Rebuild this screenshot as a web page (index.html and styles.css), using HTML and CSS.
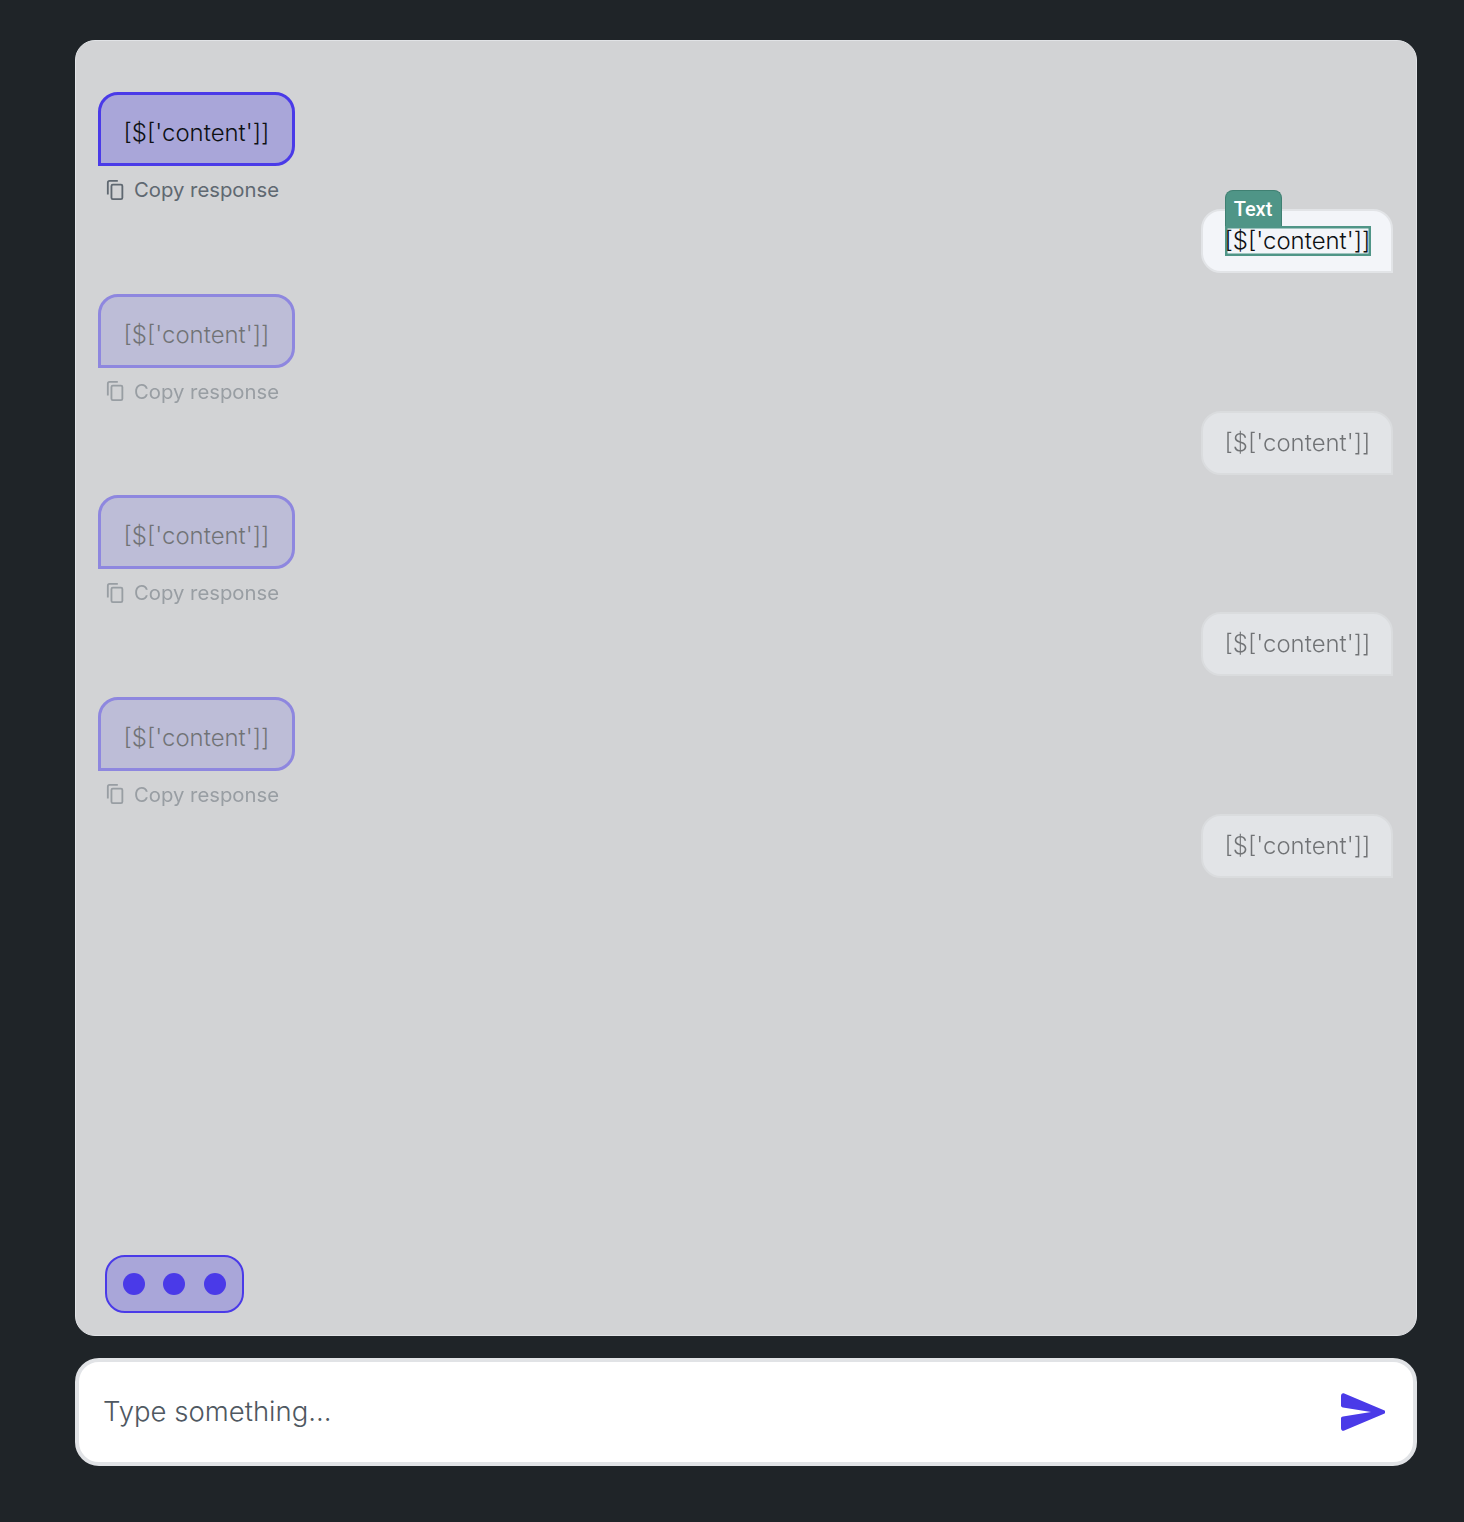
FILE: index.html
```html
<!DOCTYPE html>
<html lang="en">
<head>
    <meta charset="UTF-8">
    <meta name="viewport" content="width=device-width, initial-scale=1.0">
    <title>Chat</title>
    <link rel="stylesheet" href="styles.css">
</head>
<body>
    <div class="chat-wrap">
        <div class="chat-panel">
            <div class="messages">
                <div class="exchange">
                    <div class="agent-msg">
                        <div class="agent-bubble">[$['content']]</div>
                        <div class="copy-row">
                            <svg class="copy-icon" viewBox="0 0 20 22"><path d="M2 16V3a2 2 0 0 1 2-2h9M7.500 5h9a1.500 1.500 0 0 1 1.500 1.500v13a1.500 1.500 0 0 1-1.500 1.500h-9a1.500 1.500 0 0 1-1.500-1.500v-13A1.500 1.500 0 0 1 7.500 5z"/></svg>
                            <span>Copy response</span>
                        </div>
                    </div>
                    <div class="user-msg">
                        <div class="user-bubble">
                            <span class="field-tag">Text</span>
                            <span class="field-text">[$['content']]</span>
                        </div>
                    </div>
                </div>
                <div class="exchange faded">
                    <div class="agent-msg">
                        <div class="agent-bubble">[$['content']]</div>
                        <div class="copy-row">
                            <svg class="copy-icon" viewBox="0 0 20 22"><path d="M2 16V3a2 2 0 0 1 2-2h9M7.500 5h9a1.500 1.500 0 0 1 1.500 1.500v13a1.500 1.500 0 0 1-1.500 1.500h-9a1.500 1.500 0 0 1-1.500-1.500v-13A1.500 1.500 0 0 1 7.500 5z"/></svg>
                            <span>Copy response</span>
                        </div>
                    </div>
                    <div class="user-msg">
                        <div class="user-bubble">[$['content']]</div>
                    </div>
                </div>
                <div class="exchange faded">
                    <div class="agent-msg">
                        <div class="agent-bubble">[$['content']]</div>
                        <div class="copy-row">
                            <svg class="copy-icon" viewBox="0 0 20 22"><path d="M2 16V3a2 2 0 0 1 2-2h9M7.500 5h9a1.500 1.500 0 0 1 1.500 1.500v13a1.500 1.500 0 0 1-1.500 1.500h-9a1.500 1.500 0 0 1-1.500-1.500v-13A1.500 1.500 0 0 1 7.500 5z"/></svg>
                            <span>Copy response</span>
                        </div>
                    </div>
                    <div class="user-msg">
                        <div class="user-bubble">[$['content']]</div>
                    </div>
                </div>
                <div class="exchange faded">
                    <div class="agent-msg">
                        <div class="agent-bubble">[$['content']]</div>
                        <div class="copy-row">
                            <svg class="copy-icon" viewBox="0 0 20 22"><path d="M2 16V3a2 2 0 0 1 2-2h9M7.500 5h9a1.500 1.500 0 0 1 1.500 1.500v13a1.500 1.500 0 0 1-1.500 1.500h-9a1.500 1.500 0 0 1-1.500-1.500v-13A1.500 1.500 0 0 1 7.500 5z"/></svg>
                            <span>Copy response</span>
                        </div>
                    </div>
                    <div class="user-msg">
                        <div class="user-bubble">[$['content']]</div>
                    </div>
                </div>
            </div>
            <div class="typing">
                <span class="dot"></span>
                <span class="dot"></span>
                <span class="dot"></span>
            </div>
        </div>
        <div class="chat-input">
            <span class="placeholder">Type something...</span>
            <svg class="send-icon" viewBox="0 0 44 38"><path d="M0 3C0 .800 1.500-.400 3.300.400L43 17.300c1.800.800 1.800 2.600 0 3.400L3.300 37.600C1.500 38.400 0 37.200 0 35V25.500c0-1.200.800-1.800 2-2L30 19 2 14.500c-1.200-.200-2-.800-2-2z"/></svg>
        </div>
    </div>
</body>
</html>
```

FILE: styles.css
```css
* {
    box-sizing: border-box;
}
html, body {
    height: 100%;
}
body {
    margin: 0;
    background-color: #1f2428;
    font-family: Inter, 'Noto Sans', sans-serif;
    color: #0e1114;
}
.chat-wrap {
    display: flex;
    flex-direction: column;
    gap: 22px;
    height: 1522px;
    padding: 40px 47px 56px 75px;
}
.chat-panel {
    flex: 1;
    display: flex;
    flex-direction: column;
    justify-content: space-between;
    background-color: #d2d3d5;
    border: 1px solid #e1e3e6;
    border-radius: 20px;
    padding: 51px 23px 22px 22px;
}
.messages {
    display: flex;
    flex-direction: column;
    gap: 20.670px;
}
.exchange {
    display: flex;
    flex-direction: column;
    gap: 5px;
}
.exchange.faded {
    opacity: 0.5;
}
.agent-msg {
    display: flex;
    flex-direction: column;
    align-items: flex-start;
    gap: 9px;
}
.agent-bubble {
    width: 197px;
    padding: 23px 0 16px 22.500px;
    font-size: 23.950px;
    font-weight: 300;
    line-height: 29px;
    white-space: nowrap;
    background-color: #a9a6d9;
    border: 3px solid #4a3ae8;
    border-radius: 20px 20px 20px 0;
}
.copy-row {
    display: flex;
    align-items: center;
    gap: 9.800px;
    height: 29px;
    padding-left: 8px;
    font-size: 20.300px;
    color: #5f6871;
}
.copy-icon {
    width: 18.200px;
    height: 20px;
    fill: none;
    stroke: #5f6871;
    stroke-width: 2;
}
.user-msg {
    display: flex;
    justify-content: flex-end;
}
.user-bubble {
    position: relative;
    width: 192px;
    padding: 15px 0 15px 21.500px;
    font-size: 23.950px;
    font-weight: 300;
    line-height: 30px;
    white-space: nowrap;
    background-color: #f3f5f9;
    border: 2px solid #e2e4e7;
    border-radius: 20px 20px 0 20px;
}
.field-text {
    display: block;
    width: 146px;
    box-shadow: inset 0 0 0 2.500px #4f9587;
}
.field-tag {
    position: absolute;
    left: 21.500px;
    top: -21px;
    width: 57px;
    height: 36px;
    padding-top: 5px;
    text-align: center;
    font-family: Roboto, sans-serif;
    font-size: 20px;
    line-height: 26px;
    font-weight: 500;
    color: #fff;
    background-color: #4f9587;
    border: 1px solid #3f8072;
    border-bottom: none;
    border-radius: 8px 8px 0 0;
}
.typing {
    align-self: flex-start;
    display: flex;
    align-items: center;
    gap: 18.250px;
    width: 139px;
    height: 58px;
    margin-left: 7px;
    padding-left: 16px;
    background-color: #a9a6d9;
    border: 2px solid #4a3ae8;
    border-radius: 20px;
}
.dot {
    width: 22px;
    height: 22px;
    border-radius: 50%;
    background-color: #4a3ae8;
}
.chat-input {
    flex: none;
    display: flex;
    align-items: center;
    justify-content: space-between;
    height: 108px;
    padding: 0 28px 0 24px;
    background-color: #fff;
    border: 4px solid #e1e3e6;
    border-radius: 24px;
}
.placeholder {
    padding-bottom: 2px;
    font-size: 27.500px;
    font-weight: 300;
    color: #4f5861;
}
.send-icon {
    width: 44px;
    height: 38px;
    fill: #4a3ae8;
}
```
